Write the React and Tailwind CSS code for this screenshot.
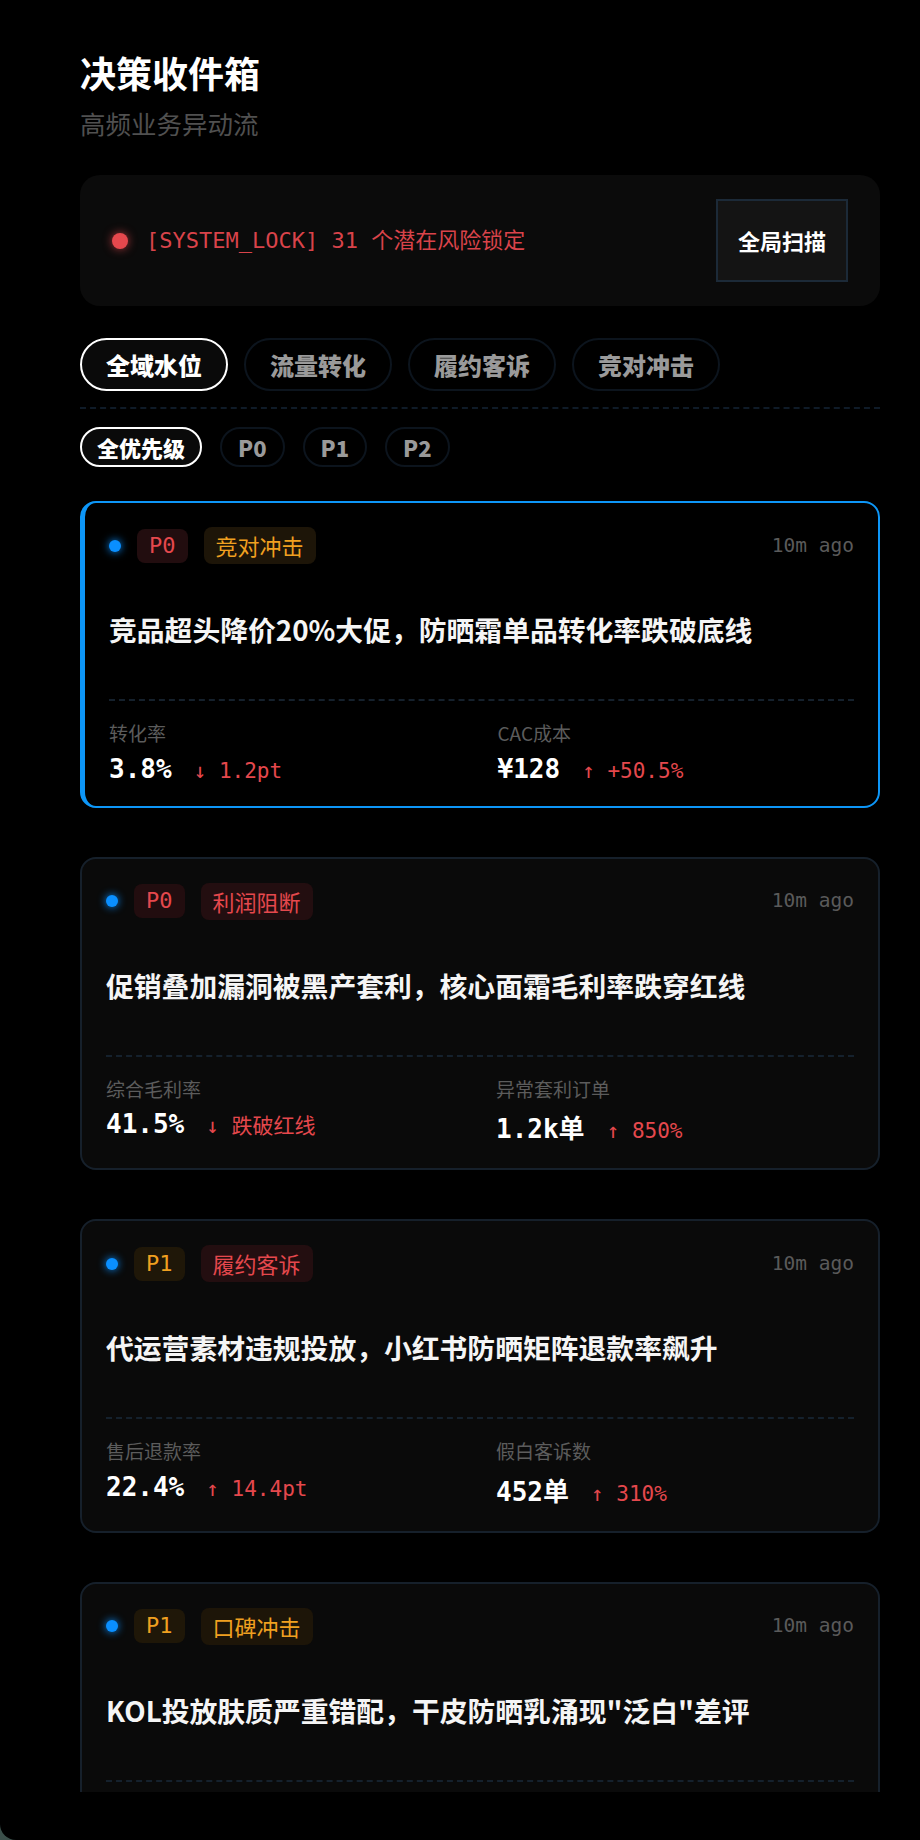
import React, { useState } from 'react';

const SANS = "font-['Noto_Sans_CJK_SC','Noto_Sans',sans-serif]";
const MONO = "font-['DejaVu_Sans_Mono','Noto_Sans_CJK_SC',monospace]";

const tabs = ['全域水位', '流量转化', '履约客诉', '竞对冲击'];
const priorities = ['全优先级', 'P0', 'P1', 'P2'];

const cards = [
  {
    level: 'P0',
    category: '竞对冲击',
    categoryTone: 'amber',
    title: '竞品超头降价20%大促，防晒霜单品转化率跌破底线',
    active: true,
    metrics: [
      { label: '转化率', value: '3.8%', delta: '↓ 1.2pt' },
      { label: 'CAC成本', value: '¥128', delta: '↑ +50.5%' },
    ],
  },
  {
    level: 'P0',
    category: '利润阻断',
    categoryTone: 'red',
    title: '促销叠加漏洞被黑产套利，核心面霜毛利率跌穿红线',
    metrics: [
      { label: '综合毛利率', value: '41.5%', delta: '↓ 跌破红线' },
      { label: '异常套利订单', value: '1.2k单', delta: '↑ 850%' },
    ],
  },
  {
    level: 'P1',
    category: '履约客诉',
    categoryTone: 'red',
    title: '代运营素材违规投放，小红书防晒矩阵退款率飙升',
    metrics: [
      { label: '售后退款率', value: '22.4%', delta: '↑ 14.4pt' },
      { label: '假白客诉数', value: '452单', delta: '↑ 310%' },
    ],
  },
  {
    level: 'P1',
    category: '口碑冲击',
    categoryTone: 'amber',
    title: 'KOL投放肤质严重错配，干皮防晒乳涌现"泛白"差评',
    metrics: [
      { label: '负面声量', value: '2.3k条', delta: '↑ 420%' },
      { label: '差评率', value: '8.6%', delta: '↑ 5.1pt' },
    ],
  },
];

const hasCJK = (s) => /[\u4e00-\u9fff]/.test(s);

const levelTag = (level) =>
  level === 'P0' ? 'bg-[#220d0f] text-[#e5484d]' : 'bg-[#1f1708] text-[#f0a020]';

const categoryTag = (tone) =>
  tone === 'red' ? 'bg-[#230e10] text-[#e5484d]' : 'bg-[#1d1508] text-[#f0a020]';

const AlertCard = ({ card }) => (
  <div
    className={
      card.active
        ? 'rounded-2xl border-2 border-l-[5px] border-[#0d96f7] bg-black px-6 pt-6 pb-[22px]'
        : 'rounded-2xl border-2 border-[#16202b] bg-[#0a0a0a] px-6 pt-6 pb-[22px]'
    }
  >
    {/* header */}
    <div className="flex items-center justify-between">
      <div className="flex items-center gap-4">
        <span className="w-3 h-3 rounded-full bg-[#0a8fff] shadow-[0_0_8px_#0a8fff]" />
        <span className={`${MONO} ${levelTag(card.level)} rounded-lg px-3 py-1 text-[22px] leading-[26px]`}>
          {card.level}
        </span>
        <span className={`${SANS} ${categoryTag(card.categoryTone)} rounded-lg px-3 py-1 text-[22px] leading-[29px]`}>
          {card.category}
        </span>
      </div>
      <span className={`${MONO} text-[19.5px] text-[#5a5a5a]`}>10m ago</span>
    </div>

    <h3 className={`${SANS} mt-[44px] mb-[49px] text-[27.8px] leading-[42px] font-bold text-[#f5f5f5]`}>
      {card.title}
    </h3>

    <div className="border-t-2 border-dashed border-[#15212d] pt-[18px] grid grid-cols-2 gap-8">
      {card.metrics.map((m) => (
        <div key={m.label}>
          <p className={`${SANS} text-[19px] leading-normal text-[#5c5c5c]`}>{m.label}</p>
          <div className="mt-[6px] flex items-baseline gap-[22px]">
            <span
              className={
                hasCJK(m.value)
                  ? `${MONO} pt-[5px] pb-[2px] text-[26px] leading-[30px] font-bold text-white`
                  : `${MONO} text-[26px] leading-[30px] font-bold text-white`
              }
            >
              {m.value}
            </span>
            <span className={`${MONO} text-[21px] leading-[25px] text-[#e5484d]`}>{m.delta}</span>
          </div>
        </div>
      ))}
    </div>
  </div>
);

const App = () => {
  const [tab, setTab] = useState(0);
  const [priority, setPriority] = useState(0);

  return (
    <div className="h-[1840px] bg-[#3b4f4a]">
      <div className="h-full bg-black rounded-bl-[16px] overflow-hidden">
        <main className={`${SANS} h-[1792px] overflow-hidden pl-20 pr-10 pt-[50px]`}>
          <h1 className="text-[36px] leading-[44px] font-bold text-white">决策收件箱</h1>
          <p className="mt-[10px] text-[25.5px] leading-[38px] text-[#505050]">高频业务异动流</p>

          {/* System lock banner */}
          <div className="mt-[33px] flex items-center justify-between rounded-[20px] bg-[#0b0b0b] px-8 py-6">
            <div className="flex items-center gap-[18px]">
              <span className="w-4 h-4 rounded-full bg-[#e5484d] shadow-[0_0_10px_rgba(229,72,77,0.75)]" />
              <span className={`${MONO} text-[22px] text-[#d9434a]`}>[SYSTEM_LOCK] 31 个潜在风险锁定</span>
            </div>
            <button className="border-2 border-[#1c2a38] bg-[#141414] px-5 py-6 text-[22px] leading-[31px] font-bold text-white">
              全局扫描
            </button>
          </div>

          {/* Domain tabs */}
          <div className="mt-8 flex gap-4 pb-4 border-b-2 border-dashed border-[#0f1b28]">
            {tabs.map((t, i) => (
              <button
                key={t}
                onClick={() => setTab(i)}
                className={
                  i === tab
                    ? 'rounded-full border-2 border-white bg-[#0a0a0a] px-6 py-3 text-[24px] leading-[25px] font-black text-white'
                    : 'rounded-full border-2 border-[#0c141d] bg-black px-6 py-3 text-[24px] leading-[25px] font-black text-[#9a9a9a]'
                }
              >
                {t}
              </button>
            ))}
          </div>

          {/* Priority pills */}
          <div className="mt-[18px] flex gap-[18px]">
            {priorities.map((p, i) => (
              <button
                key={p}
                onClick={() => setPriority(i)}
                className={
                  i === priority
                    ? 'rounded-full border-2 border-white bg-[#0a0a0a] px-[15px] py-[4px] text-[22px] leading-[28px] font-black text-white'
                    : 'rounded-full border-2 border-[#0c141d] bg-black px-[16px] py-[4px] text-[22px] leading-[28px] font-black text-[#9a9a9a]'
                }
              >
                {p}
              </button>
            ))}
          </div>

          {/* Alert cards */}
          <div className="mt-[34px] flex flex-col gap-[49px]">
            {cards.map((c) => (
              <AlertCard key={c.title} card={c} />
            ))}
          </div>
        </main>
      </div>
    </div>
  );
};

export default App;
